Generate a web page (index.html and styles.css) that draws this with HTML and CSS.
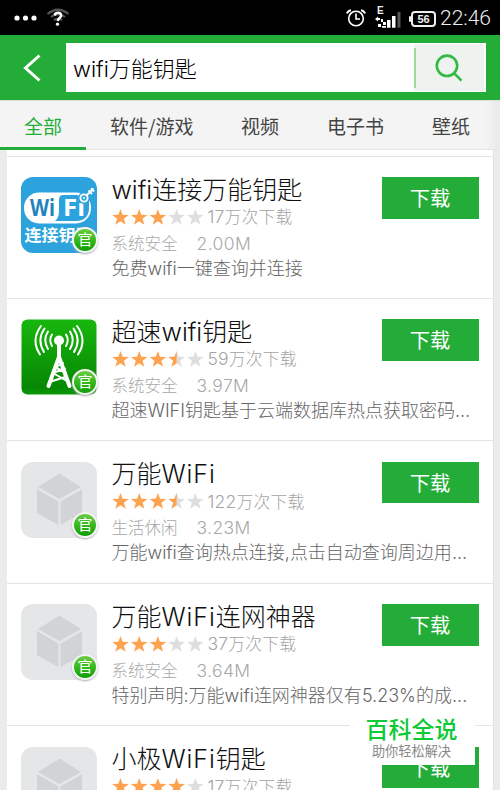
FILE: index.html
```html
<!DOCTYPE html>
<html lang="zh-CN">
<head>
<meta charset="utf-8">
<title>wifi万能钥匙</title>
<link rel="stylesheet" href="styles.css">
</head>
<body>
<svg class="defs" aria-hidden="true">
  <defs>
    <linearGradient id="greenTile" x1="0" y1="0" x2="0" y2="1"><stop offset="0" stop-color="#17b70d"/><stop offset=".9" stop-color="#078704"/><stop offset="1" stop-color="#0b9808"/></linearGradient>
    <path id="star" d="M8.5 0 10.6 5.8 16.8 6 11.9 9.8 13.7 15.7 8.5 12.2 3.3 15.7 5.1 9.8 .2 6 6.4 5.8Z"/>
    <path id="halfStar" d="M8.5 0V12.2L3.3 15.7 5.1 9.8 .2 6 6.4 5.8Z"/>
    <g id="stars3"><use href="#star" class="on"/><use href="#star" x="18.7" class="on"/><use href="#star" x="37.4" class="on"/></g>
    <symbol id="r30" viewBox="0 0 92 16"><use href="#stars3"/><use href="#star" x="56.1" class="off"/><use href="#star" x="74.8" class="off"/></symbol>
    <symbol id="r35" viewBox="0 0 92 16"><use href="#stars3"/><use href="#star" x="56.1" class="off"/><use href="#halfStar" x="56.1" class="on"/><use href="#star" x="74.8" class="off"/></symbol>
    <symbol id="r40" viewBox="0 0 92 16"><use href="#stars3"/><use href="#star" x="56.1" class="on"/><use href="#star" x="74.8" class="off"/></symbol>
    <symbol id="cube" viewBox="0 0 76 76"><rect width="76" height="76" rx="12" fill="#e5e6e8"/><path d="M38.5 11.500 60 25 38.500 37 17 25Z M16 27.200 37.400 39.500V63L16 51Z M39.600 39.500 61 27.200V51L39.600 63Z" fill="#d2d3d7"/></symbol>
    <symbol id="tower" viewBox="0 0 76 76"><rect x=".5" y=".5" width="75" height="75" rx="6" fill="url(#greenTile)"/>
      <g fill="none" stroke="#fff" stroke-linecap="round"><path stroke-width="4" d="M38 23V38M38 38 27.500 67M38 38 48.500 67"/><path stroke-width="2" d="M33.500 49 42 44M32 54 44 49.500M32 54 45 61.500M28.500 63 44 58M34 48 45 54"/>
      <path stroke-width="2" d="M31 15.500Q27.500 21 31 27M27 12.500Q21.500 21 27 30M23.500 9.500Q15.500 21 23 33M20 7Q9.500 21 19 35.500M45 15.500Q48.500 21 45 27M49 12.500Q54.500 21 49 30M52.500 9.500Q60.500 21 53 33M56 7Q66.500 21 57 35.500"/></g><circle cx="38" cy="21.500" r="5" fill="#fff"/></symbol>
  </defs>
</svg>
<div class="statusbar">
  <svg class="dots" viewBox="0 0 24 6"><circle cx="3" cy="3" r="2.600"/><circle cx="11.500" cy="3" r="2.600"/><circle cx="20" cy="3" r="2.600"/></svg>
  <svg class="wifi" viewBox="0 0 24 20"><g fill="none" stroke-width="2.200"><path stroke="#555" d="M1.500 6Q12-2.500 22.500 6M5 9Q12 3.500 19 9M8 12Q12 9.500 16 12"/><path stroke="#fff" stroke-width="2.400" d="M8.700 7.500Q9 4.800 12 4.800T15.200 7.500C15.200 9.500 12.200 10 11.700 13"/></g><circle cx="11.500" cy="16.200" r="1.600" fill="#fff"/></svg>
  <svg class="alarm" viewBox="0 0 20 18"><g fill="none" stroke="#fff"><circle cx="10" cy="9.500" r="7.300" stroke-width="1.600"/><path d="M10 4.500V10H14" stroke-width="1.600"/><path d="M1 4.500Q2 1.500 5 1.200M19 4.500Q18 1.500 15 1.200" stroke-width="2"/></g></svg>
  <span class="signal"><span class="net">E</span><svg viewBox="0 0 26 18"><path fill="#fff" d="M0 9 3 6.500V8H5V10H3V11.500ZM6 9H8V12H6ZM8 12H11V15H8ZM3 14H6V17H3ZM7 16H11V17.700H7ZM12 10H15.500V17.700H12ZM17 6H20.500V17.700H17Z"/><path fill="#555" d="M22.500 2H25.500V17.700H22.500Z"/></svg></span>
  <span class="battery">56</span>
  <span class="clock">22:46</span>
</div>
<header class="header">
  <svg class="back" viewBox="0 0 18 28"><path d="M16.500 1.500 2.500 14 16.500 26.500" fill="none" stroke="#fff" stroke-width="3"/></svg>
  <div class="search"><span class="query"><i>wifi</i>万能钥匙</span>
    <span class="go"><svg viewBox="0 0 28 28"><circle cx="12" cy="11.800" r="10.200"/><path d="M19 19.200 26.500 26.700"/></svg></span></div>
</header>
<nav class="tabs"><span class="tab current">全部</span><span class="tab soft">软件/游戏</span><span class="tab video">视频</span><span class="tab book">电子书</span><span class="tab paper">壁纸</span></nav>
<main class="list">
  <article class="app">
    <div class="icon"><svg viewBox="0 0 76 76"><rect width="76" height="76" rx="12" fill="#2ca3dc"/><rect x="3" y="15.500" width="67" height="31" rx="15" fill="#fff"/><path d="M42 18H57Q59 25 65 25L68 23V32Q67 44 55 44H34Q38 41 38 34V23Q38 18 42 18Z" fill="#2ca3dc"/><text class="logo" x="9" y="39" fill="#2384bd" textLength="25" lengthAdjust="spacingAndGlyphs">Wi</text><text class="logo" x="42" y="39" fill="#fff" textLength="22" lengthAdjust="spacingAndGlyphs">Fi</text><g fill="none" stroke="#2ca3dc" stroke-width="5"><circle cx="63" cy="21" r="3.500"/><path d="M65.500 18.500 71 13"/></g><g fill="none" stroke="#fff" stroke-width="1.900"><circle cx="63" cy="21" r="3.600"/><path d="M65.500 18.500 72.500 11.500M67.500 13.500 71 17M70 11.500 73 14.500"/></g><text class="caption" x="3.500" y="64" textLength="68" lengthAdjust="spacingAndGlyphs">连接钥匙</text></svg><span class="badge">官</span></div>
    <div class="info"><h2><i>wifi</i>连接万能钥匙</h2><p class="rating"><svg><use href="#r30"/></svg><span><i>17</i>万次下载</span></p><p class="meta"><span>系统安全</span><i>2.00M</i></p><p class="desc">免费<i>wifi</i>一键查询并连接</p></div>
    <span class="download">下载</span>
  </article>
  <article class="app">
    <div class="icon"><svg><use href="#tower"/></svg><span class="badge">官</span></div>
    <div class="info"><h2>超速<i>wifi</i>钥匙</h2><p class="rating"><svg><use href="#r35"/></svg><span><i>59</i>万次下载</span></p><p class="meta"><span>系统安全</span><i>3.97M</i></p><p class="desc">超速<i>WIFI</i>钥匙基于云端数据库热点获取密码<i>...</i></p></div>
    <span class="download">下载</span>
  </article>
  <article class="app">
    <div class="icon"><svg><use href="#cube"/></svg><span class="badge">官</span></div>
    <div class="info"><h2>万能<i class="wide">WiFi</i></h2><p class="rating"><svg><use href="#r35"/></svg><span><i>122</i>万次下载</span></p><p class="meta"><span>生活休闲</span><i>3.23M</i></p><p class="desc">万能<i>wifi</i>查询热点连接<i>,</i>点击自动查询周边用<i>...</i></p></div>
    <span class="download">下载</span>
  </article>
  <article class="app">
    <div class="icon"><svg><use href="#cube"/></svg><span class="badge">官</span></div>
    <div class="info"><h2>万能<i class="wide">WiFi</i>连网神器</h2><p class="rating"><svg><use href="#r30"/></svg><span><i>37</i>万次下载</span></p><p class="meta"><span>系统安全</span><i>3.64M</i></p><p class="desc">特别声明<i>:</i>万能<i>wifi</i>连网神器仅有<i>5.23%</i>的成<i>...</i></p></div>
    <span class="download">下载</span>
  </article>
  <article class="app">
    <div class="icon"><svg><use href="#cube"/></svg></div>
    <div class="info"><h2>小极<i class="wide">WiFi</i>钥匙</h2><p class="rating"><svg><use href="#r40"/></svg><span><i>17</i>万次下载</span></p></div>
    <span class="download">下载</span>
  </article>
</main>
<aside class="brand"><strong>百科全说</strong><span>助你轻松解决</span></aside>
</body>
</html>
```
FILE: styles.css
```css
* { box-sizing: border-box; }
body {
  margin: 0; width: 500px; height: 790px; overflow: hidden; position: relative;
  display: flex; flex-direction: column; background: #ebebeb;
  font-family: "Noto Sans CJK SC", sans-serif; font-weight: 300;
}
h2, p { margin: 0; font-weight: 300; white-space: nowrap; }
i { font-style: normal; font-family: Inter, "Noto Sans CJK SC", sans-serif; font-weight: 300; }
svg { display: block; flex: none; }
.defs { position: absolute; width: 0; height: 0; }
.on { fill: #ffa250; }
.off { fill: #dedede; }

.statusbar { flex: none; height: 35px; background: #000; color: #eee; display: flex; align-items: center; padding: 0 9px 0 14px; font-family: Roboto, sans-serif; }
.dots { width: 24px; height: 6px; fill: #fff; }
.wifi { width: 24px; height: 20px; margin-left: 8px; }
.alarm { width: 20px; height: 18px; margin-left: auto; }
.signal { width: 26px; height: 22px; margin-left: 9px; display: flex; flex-direction: column; margin-top: -2px; }
.signal svg { width: 26px; height: 18px; margin-top: -6px; }
.net { font: 700 10px/10px "Liberation Sans", sans-serif; padding-left: 2px; height: 10px; flex: none; }
.battery { position: relative; width: 25px; height: 16px; margin-left: 10px; border: 2px solid #eee; border-radius: 4px; font: 700 11px/12px "Liberation Sans", sans-serif; text-align: center; margin-top: 2px; }
.battery::before { content: ""; position: absolute; left: -4px; top: 3px; width: 2px; height: 6px; border-radius: 1px; background: #eee; }
.clock { font-size: 21px; font-weight: 300; width: 51px; margin-left: 4px; line-height: 35px; padding-top: 2px; white-space: nowrap; }

.header { flex: none; height: 65px; background: #23ad38; display: flex; padding: 8px 14px 0 23px; }
.back { width: 18px; height: 28px; margin: 11px 25px 0 0; }
.search { width: 420px; height: 49px; background: #fff; display: flex; justify-content: space-between; padding: 1px 2px 1px 7px; }
.query { font-size: 22px; line-height: 46px; color: #000; }
.query i { font-size: 22px; }
.go { width: 70px; height: 47px; background: #eff3f0; position: relative; display: flex; justify-content: center; align-items: center; }
.go::before { content: ""; position: absolute; left: 0; top: 4px; width: 1.500px; height: 40px; background: #9bdc9f; }
.go svg { width: 28px; height: 28px; fill: none; stroke: #33b944; stroke-width: 2.600; margin-top: 1px; }

.tabs { flex: none; height: 50px; background: linear-gradient(90deg, #f4f4f4 97%, #e9e9e9); display: flex; border-top: 1px solid #dcdfdc; border-bottom: 1px solid #e4e4e4; font-size: 19px; line-height: 49px; color: #444; white-space: nowrap; }
.tab { font-weight: 400; }
.current { width: 86px; height: 49px; text-align: center; color: #23ad38; border-bottom: 3px solid #23ad38; }
.soft { width: 84px; margin-left: 24px; }
.video { margin-left: 47px; }
.book { margin-left: 48px; }
.paper { margin-left: 48px; }

.list { flex: 1; min-height: 0; overflow: hidden; width: 487px; margin-left: 7px; padding-top: 5.600px; background: #fff; border-right: 1px solid #e3e3e3; }
.app { height: 142.400px; border-top: 1px solid #e4e4e4; display: flex; padding: 19px 14px 0; }
.icon { position: relative; width: 76px; height: 76px; margin-top: 1.500px; }
.icon > svg { width: 76px; height: 76px; }
.badge { position: absolute; left: 51px; top: 50px; width: 26px; height: 26px; border: 2px solid #f4f4f4; border-radius: 50%; background: linear-gradient(#6ccb43, #35b91e 50%, #109d04); box-shadow: 0 1px 2px #aaa; color: #fff; font-size: 15px; line-height: 20px; display: flex; justify-content: center; font-weight: 400; }
.logo { font: 700 23px "Open Sans", sans-serif; }
.caption { font: 700 16px "Noto Sans CJK SC", sans-serif; fill: #fff; }
.info { width: 270px; margin-left: 14.500px; margin-top: -2px; }
h2 { font-size: 25px; line-height: 29px; color: #111; }
.wide { letter-spacing: .9px; }
.rating { height: 24px; display: flex; align-items: center; font-size: 16.800px; line-height: 26px; color: #a4a4a4; letter-spacing: .2px; }
.rating svg { width: 92px; height: 16px; margin-right: 4px; }
.rating i { font-size: 17.500px; }
.meta { height: 27px; line-height: 29px; font-size: 16.500px; color: #a8a8a8; display: flex; gap: 19px; }
.meta i { font-size: 17.500px; letter-spacing: .4px; }
.desc { line-height: 22px; font-size: 18px; color: #666; }
.desc i { font-size: 18px; }
.download { flex: none; width: 97px; height: 41.500px; margin-top: 1.500px; background: #23ad38; color: #fff; font-size: 20.300px; line-height: 41px; text-align: center; font-weight: 400; }

.brand { position: absolute; left: 350px; top: 714px; width: 125px; height: 51px; background: #fff; display: flex; flex-direction: column; align-items: center; line-height: 1; white-space: nowrap; }
.brand strong { font-size: 23px; font-weight: 500; line-height: 29px; color: #0dca35; padding-right: 2px; }
.brand span { font-size: 13.200px; line-height: 15px; font-weight: 400; color: #888; padding-right: 2px; }
```
